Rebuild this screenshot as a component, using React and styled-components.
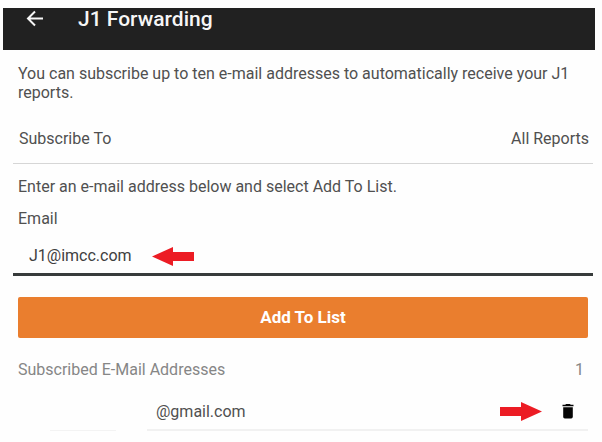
import React, { useState } from "react";
import styled, { createGlobalStyle } from "styled-components";

const GlobalStyle = createGlobalStyle`
  * {
    box-sizing: border-box;
  }
  body {
    margin: 0;
    background-color: #fefefe;
    color: #505050;
    font-family: Roboto, "Liberation Sans", sans-serif;
    font-size: 16px;
    line-height: 19px;
  }
  button,
  input {
    font: inherit;
  }
`;

const Page = styled.div`
  padding: 8px 7px 0 3px;
`;

const Header = styled.header`
  display: flex;
  align-items: flex-start;
  height: 42px;
  padding-left: 22px;
  background-color: #212121;
  color: #f6f6f6;
`;

const IconButton = styled.button`
  display: flex;
  padding: 0;
  border: none;
  background: none;
  color: inherit;
  cursor: pointer;
`;

const Title = styled.h1`
  margin: 0 0 0 33px;
  font-size: 21px;
  font-weight: 500;
  line-height: 22px;
`;

const Main = styled.main`
  padding: 14px 2px 0 10px;
`;

const Text = styled.p`
  margin: 0;
  padding: 0 5px;
`;

const SubscribeRow = styled.div`
  display: flex;
  justify-content: space-between;
  margin: 27px 0 13px;
  padding: 0 4px 15px 6px;
  border-bottom: 1px solid #d6d6d6;
`;

const Label = styled.label`
  display: block;
  margin-top: 13px;
  padding: 0 5px;
`;

const InputWrap = styled.div`
  position: relative;
  margin: 10px 0 21px;
`;

const EmailInput = styled.input`
  display: block;
  width: 100%;
  height: 38px;
  padding: 0 16px;
  border: none;
  border-bottom: 3px solid #373b3b;
  border-radius: 0;
  outline: none;
  background: none;
  color: #404040;
`;

const InputArrow = styled.div`
  position: absolute;
  top: 9px;
  left: 139px;
  display: flex;
`;

const AddButton = styled.button`
  display: block;
  width: calc(100% - 10px);
  height: 41px;
  margin: 0 5px;
  border: none;
  border-radius: 2px;
  background-color: #ea7e2e;
  color: #ffffff;
  font-size: 17px;
  font-weight: 700;
  cursor: pointer;
`;

const ListHead = styled.div`
  display: flex;
  justify-content: space-between;
  padding: 22px 9px 0 5px;
  color: #868686;
`;

const List = styled.ul`
  margin: 13px 5px 0;
  padding: 0;
  list-style: none;
`;

const Item = styled.li`
  display: grid;
  grid-template-columns: 66px 1fr;
  column-gap: 31px;
  margin-left: 32px;
`;

const Avatar = styled.div`
  border-bottom: 1px solid #f3f3f3;
`;

const ItemBody = styled.div`
  display: flex;
  align-items: center;
  height: 39px;
  padding: 2px 14px 0 9px;
  border-bottom: 2px solid #f1f1f1;
`;

const Address = styled.span`
  flex: 1;
`;

const DeleteButton = styled(IconButton)`
  margin-left: 20px;
  color: #050505;
`;

const BackIcon = () => (
  <svg width="20" height="20" viewBox="0 0 20 20" fill="none" stroke="currentColor" strokeWidth="2">
    <path d="M18 10.5H3M10 3.5L3 10.5L10 17.5" />
  </svg>
);

const ArrowIcon = ({ left }) => (
  <svg width="42" height="19" viewBox="0 0 42 19" fill="#ec1c24" aria-hidden="true">
    {left ? (
      <path d="M0 9.5L21 0V5H42V14H21V19Z" />
    ) : (
      <path d="M42 9.5L21 0V5H0V14H21V19Z" />
    )}
  </svg>
);

const TrashIcon = () => (
  <svg width="12" height="16" viewBox="0 0 12 16" fill="currentColor">
    <path d="M0.5 0.8H3.3L4 0H8L8.7 0.8H11.5V2.3H0.5Z" />
    <path d="M1.2 3.2H10.8V12.8Q10.8 14.5 9.2 14.5H2.8Q1.2 14.5 1.2 12.8Z" />
  </svg>
);

export default function App() {
  const [email, setEmail] = useState("J1@imcc.com");
  const [addresses, setAddresses] = useState(["@gmail.com"]);

  const handleAdd = () => {
    if (!email || addresses.length >= 10) return;
    setAddresses([...addresses, email]);
    setEmail("");
  };

  const handleDelete = (index) => {
    setAddresses(addresses.filter((_, i) => i !== index));
  };

  return (
    <>
      <GlobalStyle />
      <Page>
        <Header>
          <IconButton aria-label="Back">
            <BackIcon />
          </IconButton>
          <Title>J1 Forwarding</Title>
        </Header>
        <Main>
          <Text>
            You can subscribe up to ten e-mail addresses to automatically
            receive your J1 reports.
          </Text>
          <SubscribeRow>
            <span>Subscribe To</span>
            <span>All Reports</span>
          </SubscribeRow>
          <Text>Enter an e-mail address below and select Add To List.</Text>
          <Label htmlFor="email">Email</Label>
          <InputWrap>
            <EmailInput
              id="email"
              type="email"
              value={email}
              onChange={(e) => setEmail(e.target.value)}
            />
            <InputArrow>
              <ArrowIcon left />
            </InputArrow>
          </InputWrap>
          <AddButton onClick={handleAdd}>Add To List</AddButton>
          <ListHead>
            <span>Subscribed E-Mail Addresses</span>
            <span>{addresses.length}</span>
          </ListHead>
          <List>
            {addresses.map((address, index) => (
              <Item key={index}>
                <Avatar />
                <ItemBody>
                  <Address>{address}</Address>
                  <ArrowIcon />
                  <DeleteButton
                    aria-label="Delete"
                    onClick={() => handleDelete(index)}
                  >
                    <TrashIcon />
                  </DeleteButton>
                </ItemBody>
              </Item>
            ))}
          </List>
        </Main>
      </Page>
    </>
  );
}
